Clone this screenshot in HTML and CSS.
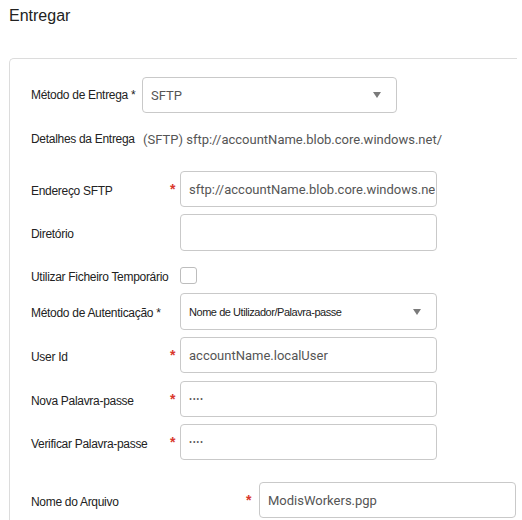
FILE: index.html
```html
<!DOCTYPE html>
<html lang="pt">
<head>
<meta charset="utf-8">
<title>Entregar</title>
<link rel="stylesheet" href="styles.css">
</head>
<body>
<h1 class="title">Entregar</h1>
<section class="card">
  <div class="row r1">
    <label class="lbl w-top">Método de Entrega *</label>
    <div class="box select sel-method"><span class="val">SFTP</span><span class="caret"></span></div>
  </div>
  <div class="row r2">
    <span class="lbl w-det">Detalhes da Entrega</span>
    <span class="val">(SFTP) sftp://accountName.blob.core.windows.net/</span>
  </div>
  <div class="row r3">
    <label class="lbl w-field fl" for="addr">Endereço SFTP</label>
    <span class="req">*</span>
    <input id="addr" class="inp field" type="text" value="sftp://accountName.blob.core.windows.net/" readonly>
  </div>
  <div class="row r4">
    <label class="lbl w-field fl" for="dir">Diretório</label>
    <span class="req"></span>
    <input id="dir" class="inp field tall" type="text" value="" readonly>
  </div>
  <div class="row r5">
    <label class="lbl w-field fl">Utilizar Ficheiro Temporário</label>
    <span class="req"></span>
    <span class="check"></span>
  </div>
  <div class="row r6">
    <label class="lbl w-field fl">Método de Autenticação *</label>
    <span class="req"></span>
    <div class="box select field tall"><span class="small-val">Nome de Utilizador/Palavra-passe</span><span class="caret"></span></div>
  </div>
  <div class="row r7">
    <label class="lbl w-field fl" for="uid">User Id</label>
    <span class="req">*</span>
    <input id="uid" class="inp field" type="text" value="accountName.localUser" readonly>
  </div>
  <div class="row r8">
    <label class="lbl w-field fl" for="pw1">Nova Palavra-passe</label>
    <span class="req">*</span>
    <input id="pw1" class="inp field pw" type="password" value="abcd" readonly>
  </div>
  <div class="row r9">
    <label class="lbl w-field fl" for="pw2">Verificar Palavra-passe</label>
    <span class="req">*</span>
    <input id="pw2" class="inp field pw" type="password" value="abcd" readonly>
  </div>
  <div class="row r10">
    <label class="lbl w-file fl" for="fname">Nome do Arquivo</label>
    <span class="req req-file">*</span>
    <input id="fname" class="inp field" type="text" value="ModisWorkers.pgp" readonly>
  </div>
</section>
</body>
</html>
```
FILE: styles.css
```css
html, body {
  margin: 0;
  padding: 0;
  background: #fff;
  overflow: hidden;
}
body {
  font-family: "Liberation Sans", Arial, sans-serif;
  color: #222;
  width: 522px;
  height: 520px;
}
.title {
  margin: 7px 0 0 9px;
  font-size: 16px;
  font-weight: normal;
  line-height: 18px;
  color: #222;
}
.card {
  margin: 33px 0 0 9px;
  width: 508px;
  height: 480px;
  box-sizing: border-box;
  border-top: 1px solid #dcdcdc;
  border-left: 1px solid #dcdcdc;
  border-top-left-radius: 5px;
  padding: 18px 0 0 21px;
}
.row {
  display: flex;
  align-items: center;
}
.lbl {
  font-size: 12px;
  letter-spacing: -0.3px;
  color: #222;
  white-space: nowrap;
  flex: none;
}
.fl { padding-top: 3px; }
.w-top { width: 111px; }
.w-det { width: 112px; }
.w-field { width: 139px; }
.w-file { width: 215px; }
.req {
  width: 10px;
  flex: none;
  color: #d9372c;
  font-size: 14px;
  font-weight: bold;
  line-height: 36px;
  align-self: stretch;
}
.req-file { width: 13px; }
.box {
  box-sizing: border-box;
  height: 36px;
  border: 1px solid #c9c9c9;
  border-radius: 4px;
  display: flex;
  align-items: center;
  padding-left: 8px;
  overflow: hidden;
  white-space: nowrap;
  flex: none;
}
.inp {
  box-sizing: border-box;
  height: 36px;
  margin: 0;
  border: 1px solid #c9c9c9;
  border-radius: 4px;
  padding: 0 1px 0 8px;
  font-family: Roboto, "Liberation Sans", sans-serif;
  font-size: 13px;
  color: #555;
  background: #fff;
  outline: none;
  flex: none;
}
.pw {
  font-size: 9px;
  letter-spacing: 0.6px;
}
.field { width: 257px; }
.tall { height: 37px; }
.sel-method { width: 255px; }
.select {
  justify-content: space-between;
  padding-right: 15px;
}
.val {
  font-family: Roboto, "Liberation Sans", sans-serif;
  font-size: 13px;
  color: #555;
}
.small-val {
  font-size: 11px;
  letter-spacing: -0.45px;
  color: #222;
}
.caret {
  width: 0;
  height: 0;
  border-left: 4px solid transparent;
  border-right: 4px solid transparent;
  border-top: 6px solid #7a7a7a;
  flex: none;
}
.check {
  box-sizing: border-box;
  width: 17px;
  height: 17px;
  border: 1px solid #bdbdbd;
  border-radius: 3px;
  flex: none;
}
.r2 { margin-top: 16px; height: 20px; }
.r3 { margin-top: 22px; }
.r4 { margin-top: 7px; }
.r5 { margin-top: 16px; height: 17px; }
.r5 .req { line-height: 17px; }
.r6 { margin-top: 9px; }
.r6 .req, .r4 .req { line-height: 37px; }
.r7 { margin-top: 7px; }
.r8 { margin-top: 8px; }
.r9 { margin-top: 7px; }
.r10 { margin-top: 22px; }
```
